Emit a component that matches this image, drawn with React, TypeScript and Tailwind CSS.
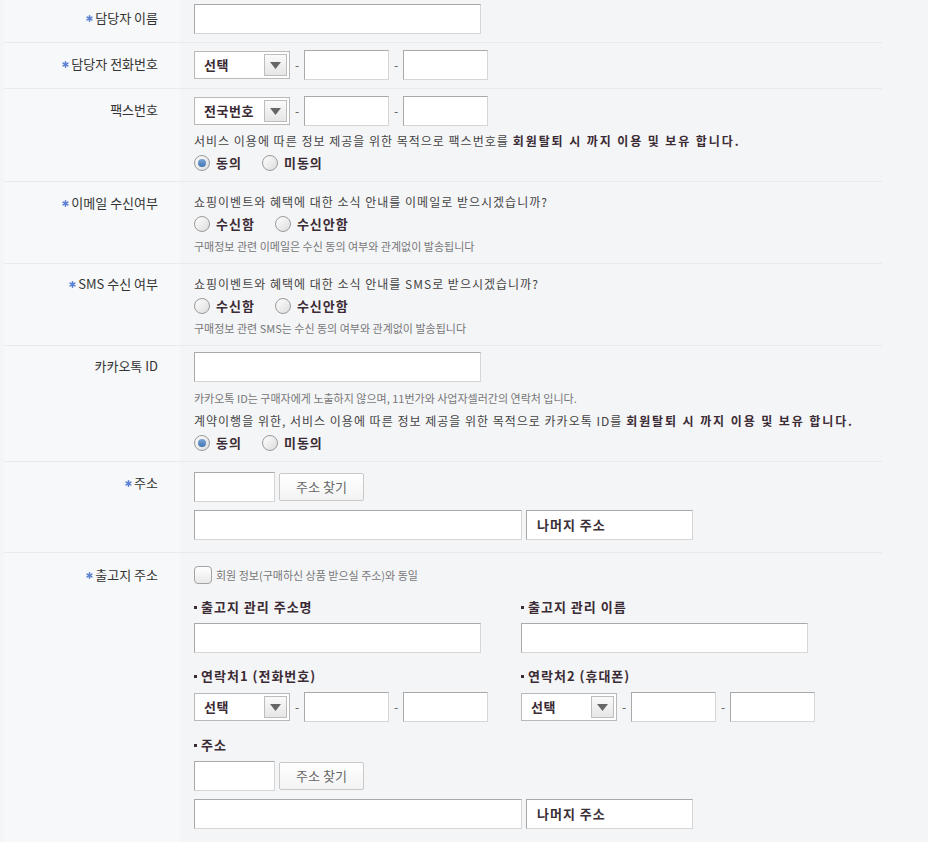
import React from 'react';

const font = { fontFamily: '"Noto Sans CJK KR", "Noto Sans", sans-serif' };

// small blue asterisk in front of required labels
const Star = () => (
  <svg className="mr-[2px]" width="7" height="7" viewBox="0 0 7 7">
    <g stroke="#5b80d3" strokeWidth="1.6" strokeLinecap="round">
      <path d="M3.5 0.8 V6.2" />
      <path d="M1.1 2.1 L5.9 4.9" />
      <path d="M1.1 4.9 L5.9 2.1" />
    </g>
  </svg>
);

const TextBox = ({ w, children }: { w: string; children?: React.ReactNode }) => (
  <div
    className={`${w} flex h-[30px] items-center border border-t-[#a9a9a9] border-l-[#a9a9a9] border-r-[#d6d6d6] border-b-[#d6d6d6] bg-white px-[10px] text-[13px] font-bold tracking-[1px] text-[#3b3038]`}
  >
    {children}
  </div>
);

const Select = ({ label }: { label: string }) => (
  <div className="my-[1px] flex h-[28px] w-[96px] items-center justify-between border border-[#b9b9b9] bg-white pl-[9px] pr-[2px]">
    <span className="text-[13px] font-bold tracking-[0.5px] text-[#3b2b35]">{label}</span>
    <span className="flex h-[22px] w-[23px] items-center justify-center border border-[#bdbdbd] bg-gradient-to-b from-[#fafafa] to-[#e6e6e6]">
      <svg width="11" height="7" viewBox="0 0 11 7">
        <path d="M0 0 H11 L5.5 7 Z" fill="#666" />
      </svg>
    </span>
  </div>
);

const Dash = () => <span className="w-[14px] text-center text-[12px] text-[#555]">-</span>;

const Phone = ({ label }: { label: string }) => (
  <div className="flex items-center">
    <Select label={label} />
    <Dash />
    <TextBox w="w-[85px]" />
    <Dash />
    <TextBox w="w-[85px]" />
  </div>
);

const Radio = ({ checked, label }: { checked?: boolean; label: string }) => (
  <div className="mr-[20px] flex items-center">
    <span className="flex h-[16px] w-[16px] items-center justify-center rounded-full border border-[#9a9a9a] bg-gradient-to-br from-[#ffffff] to-[#dcdcdc]">
      {checked && <span className="h-[8px] w-[8px] rounded-full bg-gradient-to-b from-[#7ea7d6] to-[#3f74b5]" />}
    </span>
    <span className="ml-[6px] text-[13px] font-bold tracking-[1px] text-[#3b2b35]">{label}</span>
  </div>
);

const Radios = ({ items, checked }: { items: string[]; checked?: number }) => (
  <div className="flex h-[22px] items-center">
    {items.map((it, i) => (
      <Radio key={it} label={it} checked={checked === i} />
    ))}
  </div>
);

const Line = ({ children }: { children: React.ReactNode }) => (
  <div className="flex h-[22px] items-center whitespace-nowrap text-[12px] tracking-[1px] text-[#444]">{children}</div>
);

const Note = ({ children }: { children: React.ReactNode }) => (
  <div className="flex h-[16px] items-center text-[11px] text-[#777]">{children}</div>
);

const Strong = ({ children }: { children: React.ReactNode }) => (
  <b className="ml-[4px] font-bold tracking-[1.9px] text-[#3b2b35]">{children}</b>
);

const Address = () => (
  <div className="flex flex-col gap-[8px]">
    <div className="flex items-center gap-[4px]">
      <TextBox w="w-[81px]" />
      <button className="h-[28px] w-[85px] rounded-[2px] border border-[#c9c9c9] bg-gradient-to-b from-white to-[#f3f3f3] text-[13px] text-[#666]">
        주소 찾기
      </button>
    </div>
    <div className="flex items-center gap-[4px]">
      <TextBox w="w-[328px]" />
      <TextBox w="w-[167px]">나머지 주소</TextBox>
    </div>
  </div>
);

const SubLabel = ({ children }: { children: React.ReactNode }) => (
  <div className="flex h-[16px] items-center text-[13px] font-bold tracking-[1px] text-[#3b2b35]">
    <span className="mr-[4px] inline-block h-[3px] w-[3px] bg-[#3b2b35]" />
    {children}
  </div>
);

const Label = ({ label, req, top }: { label: string; req?: boolean; top: string }) => (
  <div className={`flex w-[176px] shrink-0 items-start justify-end bg-[#f7f8f9] pr-[22px] text-[13px] text-[#333] ${top}`}>
    <span className="flex h-[16px] items-center">
      {req && <Star />}
      {label}
    </span>
  </div>
);

const Row = ({
  label,
  req,
  labelTop,
  className,
  children,
}: {
  label: string;
  req?: boolean;
  labelTop: string;
  className: string;
  children: React.ReactNode;
}) => (
  <div className="flex border-b border-[#e9eaec]">
    <Label label={label} req={req} top={labelTop} />
    <div className={`flex-1 pl-[14px] ${className}`}>{children}</div>
  </div>
);

export default function App() {
  return (
    <div className="min-h-[842px] w-[928px] bg-[#f4f5f7]" style={font}>
      <div className="ml-[4px] w-[878px]">
        <Row label="담당자 이름" req labelTop="pt-[10px]" className="pt-[4px] pb-[8px]">
          <TextBox w="w-[287px]" />
        </Row>

        <Row label="담당자 전화번호" req labelTop="pt-[13px]" className="pt-[7px] pb-[8px]">
          <Phone label="선택" />
        </Row>

        <Row label="팩스번호" labelTop="pt-[13px]" className="pt-[7px] pb-[7px]">
          <Phone label="전국번호" />
          <div className="mt-[4px]">
            <Line>
              서비스 이용에 따른 정보 제공을 위한 목적으로 팩스번호를
              <Strong>회원탈퇴 시 까지 이용 및 보유 합니다.</Strong>
            </Line>
            <Radios items={['동의', '미동의']} checked={0} />
          </div>
        </Row>

        <Row label="이메일 수신여부" req labelTop="pt-[13px]" className="pt-[9px] pb-[9px]">
          <Line>쇼핑이벤트와 혜택에 대한 소식 안내를 이메일로 받으시겠습니까?</Line>
          <Radios items={['수신함', '수신안함']} />
          <div className="mt-[3px]">
            <Note>구매정보 관련 이메일은 수신 동의 여부와 관계없이 발송됩니다</Note>
          </div>
        </Row>

        <Row label="SMS 수신 여부" req labelTop="pt-[12px]" className="pt-[9px] pb-[9px]">
          <Line>쇼핑이벤트와 혜택에 대한 소식 안내를 SMS로 받으시겠습니까?</Line>
          <Radios items={['수신함', '수신안함']} />
          <div className="mt-[3px]">
            <Note>구매정보 관련 SMS는 수신 동의 여부와 관계없이 발송됩니다</Note>
          </div>
        </Row>

        <Row label="카카오톡 ID" labelTop="pt-[12px]" className="pt-[6px] pb-[7px]">
          <TextBox w="w-[287px]" />
          <div className="mt-[8px]">
            <Note>카카오톡 ID는 구매자에게 노출하지 않으며, 11번가와 사업자셀러간의 연락처 입니다.</Note>
          </div>
          <div className="mt-[4px]">
            <Line>
              계약이행을 위한, 서비스 이용에 따른 정보 제공을 위한 목적으로 카카오톡 ID를
              <Strong>회원탈퇴 시 까지 이용 및 보유 합니다.</Strong>
            </Line>
          </div>
          <Radios items={['동의', '미동의']} checked={0} />
        </Row>

        <Row label="주소" req labelTop="pt-[13px]" className="pt-[10px] pb-[12px]">
          <Address />
        </Row>

        <div className="flex">
          <Label label="출고지 주소" req top="pt-[14px]" />
          <div className="flex-1 pt-[13px] pb-[13px] pl-[14px]">
            <div className="flex items-center">
              <span className="h-[18px] w-[18px] rounded-[4px] border border-[#a3a3a3] bg-gradient-to-b from-white to-[#e9e9e9]" />
              <span className="ml-[4px] text-[11px] text-[#777]">회원 정보(구매하신 상품 받으실 주소)와 동일</span>
            </div>
            <div className="mt-[15px] grid grid-cols-[327px_1fr]">
              <div>
                <SubLabel>출고지 관리 주소명</SubLabel>
                <div className="mt-[8px]">
                  <TextBox w="w-[287px]" />
                </div>
              </div>
              <div>
                <SubLabel>출고지 관리 이름</SubLabel>
                <div className="mt-[8px]">
                  <TextBox w="w-[287px]" />
                </div>
              </div>
              <div className="mt-[15px]">
                <SubLabel>연락처1 (전화번호)</SubLabel>
                <div className="mt-[8px]">
                  <Phone label="선택" />
                </div>
              </div>
              <div className="mt-[15px]">
                <SubLabel>연락처2 (휴대폰)</SubLabel>
                <div className="mt-[8px]">
                  <Phone label="선택" />
                </div>
              </div>
            </div>
            <div className="mt-[15px]">
              <SubLabel>주소</SubLabel>
              <div className="mt-[8px]">
                <Address />
              </div>
            </div>
          </div>
        </div>
      </div>
    </div>
  );
}
